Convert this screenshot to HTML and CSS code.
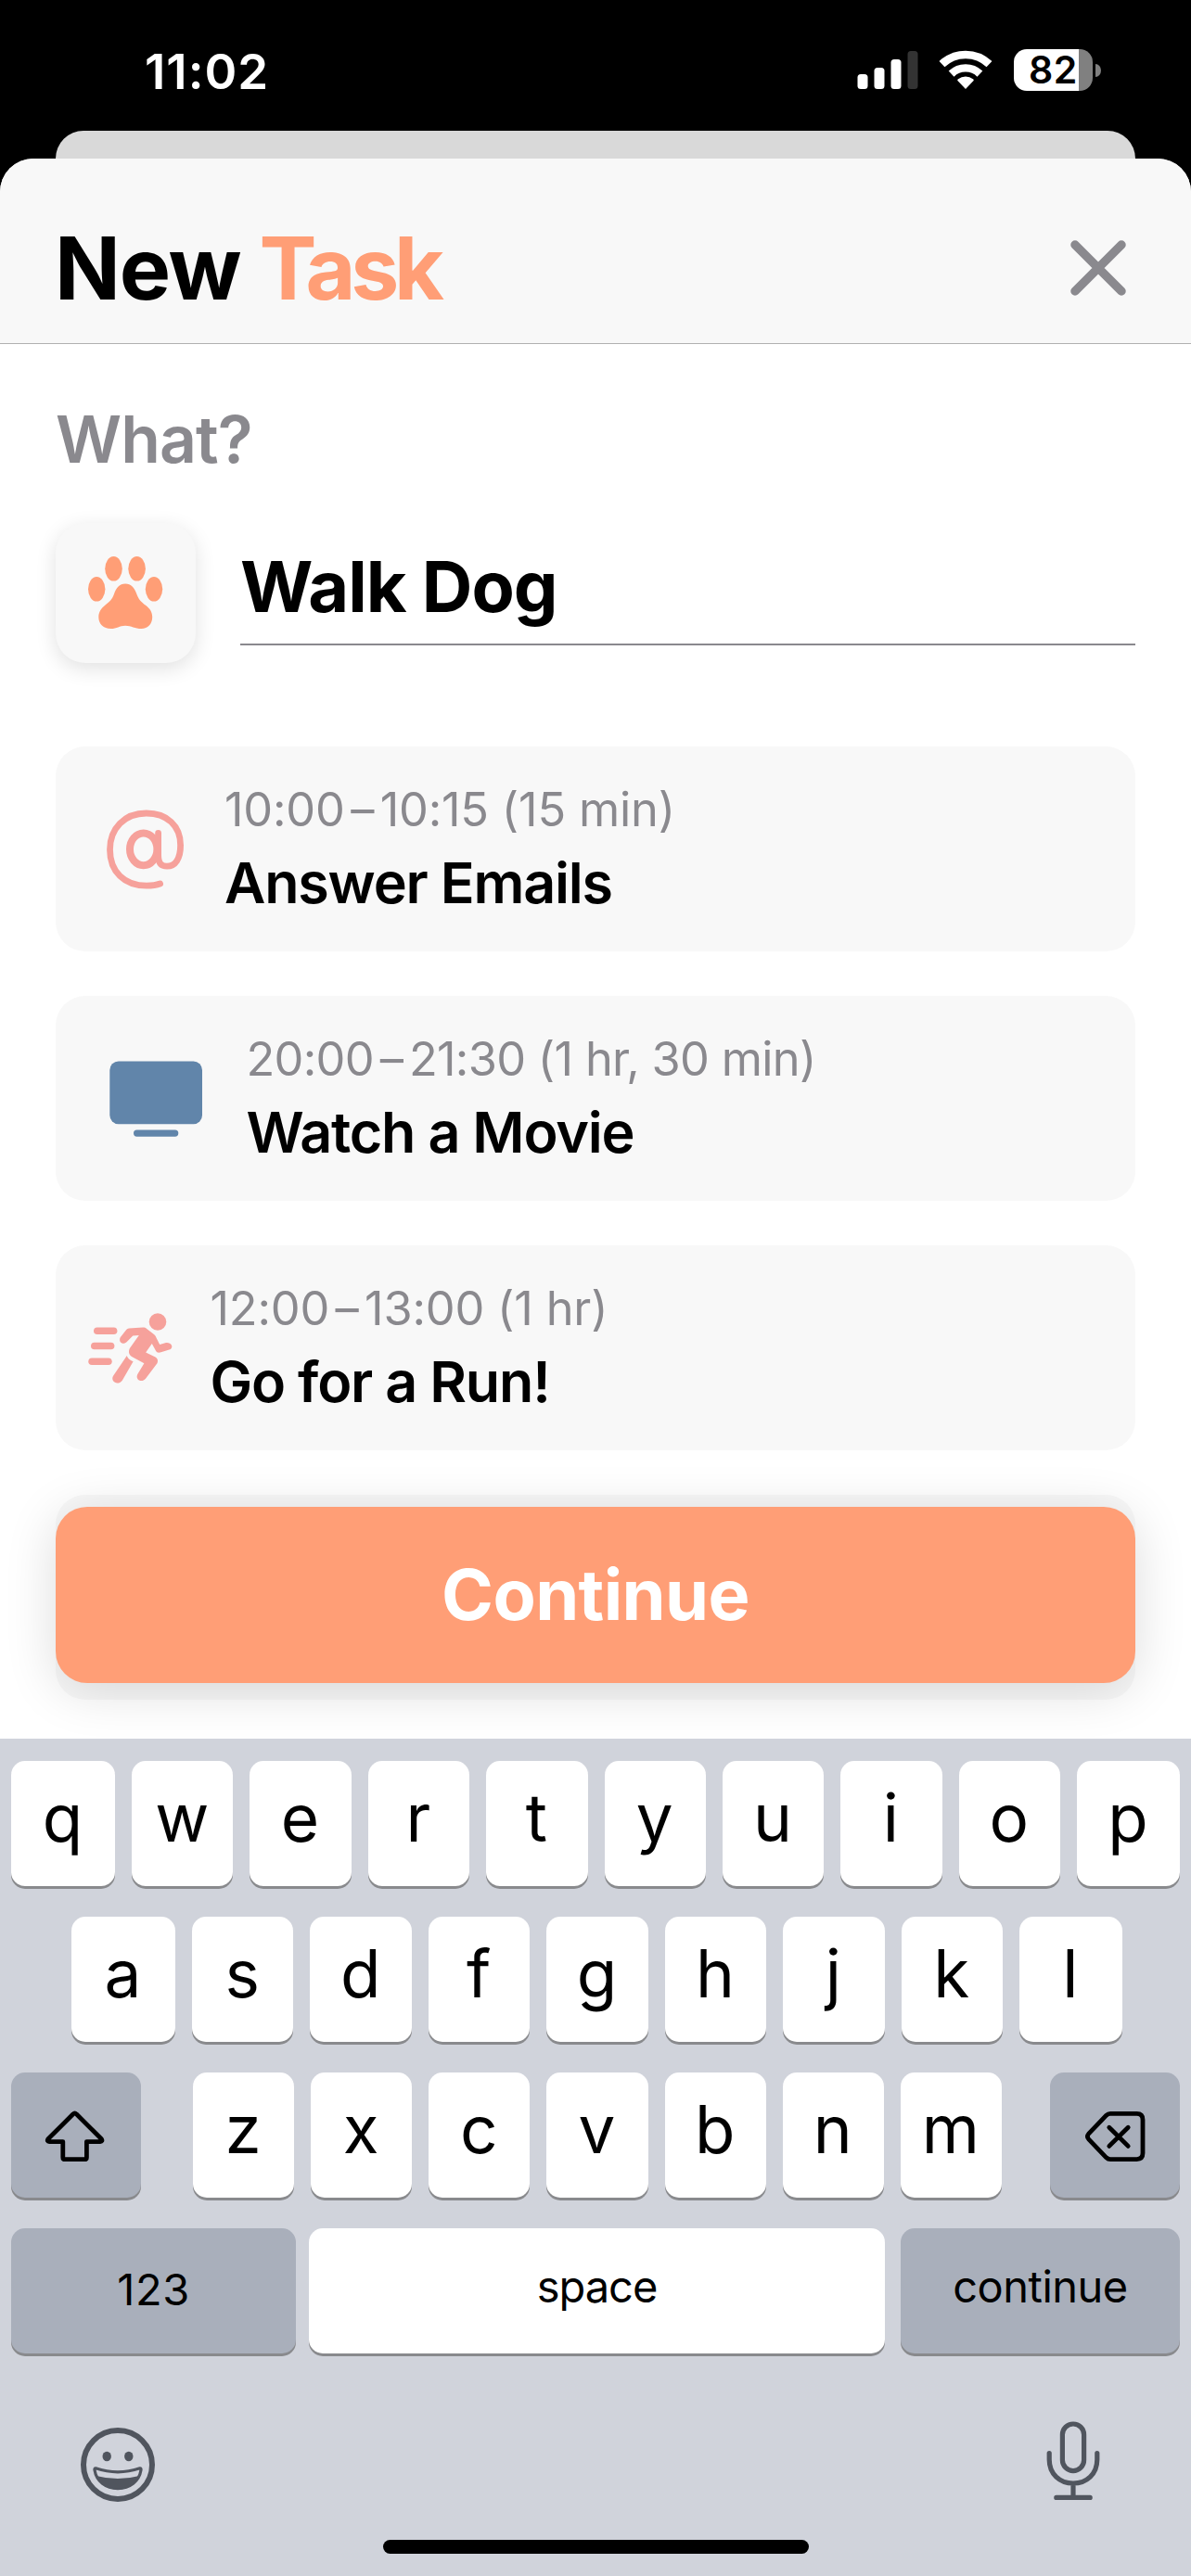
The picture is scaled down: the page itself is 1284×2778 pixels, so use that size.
FILE: index.html
```html
<!DOCTYPE html>
<html lang="en">
<head>
  <meta charset="UTF-8">
  <meta name="viewport" content="width=device-width, initial-scale=1.0">
  <title>New Task</title>
  <link rel="stylesheet" href="styles.css">
</head>
<body>

<div class="status-bar">
  <span class="time">11:02</span>
  <div class="status-icons">
    <svg class="signal" viewBox="0 0 66 45">
      <rect x="0.5" y="27" width="11" height="16" rx="3.5" fill="#fff"/>
      <rect x="18.5" y="20" width="11" height="23" rx="3.5" fill="#fff"/>
      <rect x="36.5" y="11" width="11" height="32" rx="3.5" fill="#fff"/>
      <rect x="54.5" y="2" width="11" height="41" rx="3.5" fill="#333"/>
    </svg>
    <svg class="wifi" viewBox="0 0 60 45">
      <g fill="none" stroke="#fff">
        <path d="M4.5 16.2A36.8 36.8 0 0 1 55.5 16.2" stroke-width="8.6"/>
        <path d="M14.6 26.6A22.2 22.2 0 0 1 45.4 26.6" stroke-width="8.4"/>
      </g>
      <path d="M30 43L21.9 34.6C21 33.6 21 32.9 22 32.2A12.8 12.8 0 0 1 38 32.2C39 32.9 39 33.6 38.1 34.6Z" fill="#fff"/>
    </svg>
    <div class="battery">82</div>
    <span class="battery-tip"></span>
  </div>
</div>

<div class="back-card"></div>

<div class="sheet">
  <div class="sheet-header">
    <h1><span class="title-new">New</span> <span class="title-task">Task</span></h1>
    <svg class="close" viewBox="0 0 62 62">
      <path d="M6 6L56 56M56 6L6 56" stroke="#8a898e" stroke-width="9.5" stroke-linecap="round"/>
    </svg>
  </div>

  <div class="sheet-body">
    <h2>What?</h2>

    <div class="name-row">
      <div class="icon-tile">
        <svg class="paw" viewBox="95 600 81 79" fill="#ff9e76">
          <ellipse cx="122.5" cy="613.3" rx="9.3" ry="13.3"/>
          <ellipse cx="147.6" cy="613.3" rx="9.3" ry="13.3"/>
          <ellipse cx="104.2" cy="635.3" rx="9.2" ry="13.3"/>
          <ellipse cx="166" cy="635.3" rx="9.2" ry="13.3"/>
          <path d="M135.1 629.5C141.5 629.5 144.8 633.8 147.1 640C149.5 646.5 152 649 157 652.8C161.5 656.3 164.2 660 164.2 665.5C164.2 672.8 159.3 678 152.5 678C145.5 678 141.5 674.7 135.1 674.7C128.7 674.7 126 678 119.5 678C111.5 678 106.3 672.8 106.3 665.5C106.3 660 109 656.3 113.5 652.5C118.5 648.5 120.9 646.5 123.2 640C125.5 633.8 128.7 629.5 135.1 629.5Z"/>
        </svg>
      </div>
      <input class="task-name" type="text" value="Walk Dog">
    </div>

    <div class="task-list">
      <div class="task">
        <svg class="icon-at" viewBox="95 865 123 100" fill="none" stroke="#f6a19b">
          <ellipse cx="154.7" cy="914.8" rx="14.7" ry="17.4" stroke-width="8"/>
          <path d="M170.6 897.5V921C170.6 929.5 173.5 933.2 180 933.2C189 933.2 194.6 925 194.6 910.5C194.6 889.5 180 876 157.8 876C134 876 118.5 892.5 118.5 915.2C118.5 939 134 954.2 158 954.2C164 954.2 169 953.4 172.6 952" stroke-width="6.8" stroke-linecap="round"/>
        </svg>
        <div class="info">
          <div class="when">10:00<span class="dash">–</span>10:15 (15 min)</div>
          <div class="name">Answer Emails</div>
        </div>
      </div>

      <div class="task">
        <svg class="icon-tv" viewBox="95 1134.5 146.5 100" fill="#6185aa">
          <rect x="118.3" y="1144" width="99.7" height="67.7" rx="9.5"/>
          <rect x="144" y="1218" width="48.3" height="7.2" rx="3.6"/>
        </svg>
        <div class="info">
          <div class="when when-long">20:00<span class="dash">–</span>21:30 (1 hr, 30 min)</div>
          <div class="name">Watch a Movie</div>
        </div>
      </div>

      <div class="task">
        <svg class="icon-run" viewBox="95 1403.5 107.5 100" fill="#f6a19b">
          <circle cx="170" cy="1425" r="9.3"/>
          <rect x="101" y="1431" width="25.4" height="7.6" rx="3.8"/>
          <rect x="98" y="1447.2" width="25.4" height="7.6" rx="3.8"/>
          <rect x="95.3" y="1464" width="25.4" height="7.6" rx="3.8"/>
          <path d="M139 1432L154 1431C156 1431 157 1431.4 158.2 1432.5L166 1438.5C167.2 1439.4 167.8 1440.2 168.3 1441.8L172.2 1449.4L179 1447.6C184 1446.8 187.4 1451.7 184 1454.4L173.6 1457.8C170.5 1458.6 168.9 1458 168 1456.2L163.8 1448.4L157.2 1458L167.5 1463C170 1464.6 170.6 1466.6 169.6 1469.5L157 1486.2C152.6 1491.5 145.4 1487.2 148.3 1481.5L155.4 1469.7L142 1462.5C138.8 1460.3 138.2 1457 139.9 1453.5L149.8 1439.6L143.2 1440L136.8 1446.6C133 1450.6 127.2 1447.2 129.7 1441.8L136.2 1433.6C137 1432.5 137.8 1432.1 139 1432Z"/>
          <path d="M136.8 1461.6C137.3 1464 139.8 1466.3 143.6 1467.8L131.8 1488.2C127 1494.2 118.9 1489.6 121.9 1483.6Z"/>
        </svg>
        <div class="info">
          <div class="when">12:00<span class="dash">–</span>13:00 (1 hr)</div>
          <div class="name">Go for a Run!</div>
        </div>
      </div>

      <div class="task"></div>
    </div>

    <button class="continue-btn">Continue</button>
  </div>
</div>

<div class="keyboard">
  <div class="row">
    <button class="key first">q</button>
    <button class="key">w</button>
    <button class="key">e</button>
    <button class="key">r</button>
    <button class="key">t</button>
    <button class="key">y</button>
    <button class="key">u</button>
    <button class="key">i</button>
    <button class="key">o</button>
    <button class="key last">p</button>
  </div>
  <div class="row row-2">
    <button class="key first">a</button>
    <button class="key">s</button>
    <button class="key">d</button>
    <button class="key">f</button>
    <button class="key">g</button>
    <button class="key">h</button>
    <button class="key">j</button>
    <button class="key">k</button>
    <button class="key last">l</button>
  </div>
  <div class="row row-3">
    <button class="key dark shift">
      <svg viewBox="0 0 66 56" fill="none" stroke="#000" stroke-width="4.8" stroke-linejoin="round">
        <path d="M30.9 3.8Q32.6 2 34.3 3.8L61.4 30.8Q63 33.4 60 33.6H45.4V50.4Q45.4 52.7 43.1 52.7H22.1Q19.8 52.7 19.8 50.4V33.6H5.2Q2.2 33.4 3.8 30.8Z"/>
      </svg>
    </button>
    <button class="key">z</button>
    <button class="key">x</button>
    <button class="key">c</button>
    <button class="key">v</button>
    <button class="key">b</button>
    <button class="key">n</button>
    <button class="key">m</button>
    <button class="key dark delete">
      <svg viewBox="0 0 66 56" fill="none" stroke="#000" stroke-width="4.8" stroke-linejoin="round" stroke-linecap="round">
        <path d="M28 3.4H56.5Q63 3.4 63 9.9V46.1Q63 52.6 56.5 52.6H28Q25.5 52.6 23.7 50.8L4.6 30.8Q2.2 28 4.6 25.2L23.7 5.2Q25.5 3.4 28 3.4Z"/>
        <path d="M26.8 18.2L47.2 38.4M47.2 18.2L26.8 38.4"/>
      </svg>
    </button>
  </div>
  <div class="row row-4">
    <button class="key dark num">123</button>
    <button class="key space">space</button>
    <button class="key dark return">continue</button>
  </div>

  <div class="toolbar">
    <svg class="emoji" viewBox="0 0 82 82" fill="#50555e">
      <circle cx="41" cy="41" r="37" fill="none" stroke="#50555e" stroke-width="6"/>
      <ellipse cx="29.2" cy="32" rx="4.7" ry="5.3"/>
      <ellipse cx="52.8" cy="32" rx="4.7" ry="5.3"/>
      <path d="M17.2 44.8Q41 52.8 64.8 44.8Q66.4 44.6 66 46.8C64 59 54 66.6 41 66.6C28 66.6 18 59 16 46.8Q15.6 44.6 17.2 44.8Z" fill="none" stroke="#50555e" stroke-width="3.2"/>
      <path d="M19 53.2Q41 59 63 53.2C60.5 62 51 67.6 41 67.6C31 67.6 21.5 62 19 53.2Z"/>
    </svg>
    <svg class="mic" viewBox="0 0 58 86" fill="none" stroke="#50555e" stroke-width="5.2" stroke-linecap="round">
      <rect x="17.4" y="3" width="23.2" height="50.6" rx="11.6"/>
      <path d="M3.2 34.6V41.5C3.2 57 14.5 67 29 67C43.5 67 54.8 57 54.8 41.5V34.6M29 67.5V81M10.8 82.4H47.2"/>
    </svg>
  </div>

  <div class="home-indicator"></div>
</div>

</body>
</html>
```
FILE: styles.css
```css
* {
  box-sizing: border-box;
}

body {
  margin: 0;
  width: 1284px;
  height: 2778px;
  background: #000;
  font-family: Inter, "Liberation Sans", sans-serif;
  color: #000;
  overflow: hidden;
}

h1, h2 {
  margin: 0;
}

svg {
  display: block;
  flex: none;
}

button {
  border: none;
  padding: 0;
  font-family: inherit;
  color: #000;
  cursor: pointer;
}

/* status bar */
.status-bar {
  height: 141px;
  padding: 47px 97px 0 156px;
  display: flex;
  justify-content: space-between;
  align-items: flex-start;
  color: #fff;
}

.time {
  font-size: 52.8px;
  font-weight: 600;
  line-height: 60px;
  letter-spacing: 1px;
}

.status-icons {
  display: flex;
  align-items: center;
  margin-top: 6px;
}

.signal { width: 66px; height: 45px; }
.wifi { width: 60px; height: 45px; margin-left: 21.5px; }

.battery {
  width: 85px;
  height: 45px;
  margin-left: 22px;
  padding-left: 16px;
  border-radius: 14px;
  background: linear-gradient(to right, #fff 70px, #808080 70px);
  color: #000;
  font-size: 41px;
  font-weight: 600;
  line-height: 45px;
  letter-spacing: 0.5px;
}

.battery-tip {
  width: 6px;
  height: 14px;
  margin-left: 3px;
  border-radius: 0 6px 6px 0 / 0 7px 7px 0;
  background: #808080;
}

/* sheet */
.back-card {
  height: 60px;
  margin: 0 60px -30px;
  border-radius: 30px 30px 0 0;
  background: #d9d9d9;
}

.sheet {
  position: relative;
  height: 1704px;
  border-radius: 36px 36px 0 0;
  background: #fff;
  overflow: hidden;
}

.sheet-header {
  height: 200px;
  padding: 36px 69px 0 59px;
  display: flex;
  justify-content: space-between;
  align-items: center;
  background: #f8f8f8;
  border-bottom: 1px solid #b0b0b0;
}

h1 {
  font-size: 93px;
  font-weight: 660;
  line-height: 112px;
}

.title-new {
  letter-spacing: -1.2px;
}

.title-task {
  margin-left: -2px;
  color: #ff9e76;
  letter-spacing: -5.3px;
}

.close { width: 62px; height: 62px; }

.sheet-body {
  padding: 61px 60px 0;
}

h2 {
  color: #8a898e;
  font-size: 69.7px;
  font-weight: 600;
  line-height: 84px;
  letter-spacing: -0.9px;
}

.name-row {
  display: flex;
  align-items: flex-end;
  gap: 48px;
  margin-top: 48px;
}

.icon-tile {
  width: 151px;
  height: 151px;
  display: flex;
  align-items: center;
  justify-content: center;
  border-radius: 32px;
  background: #f8f8f8;
  box-shadow: 0 6px 22px rgba(0, 0, 0, 0.12);
}

.paw { width: 81px; height: 79px; }

.task-name {
  flex: 1;
  min-width: 0;
  height: 110px;
  margin-bottom: 19px;
  padding: 0 0 15px;
  border: none;
  border-bottom: 2px solid #8a898e;
  background: none;
  font-family: inherit;
  font-size: 75.6px;
  font-weight: 700;
  letter-spacing: -0.9px;
  color: #000;
  outline: none;
}

.task-list {
  display: flex;
  flex-direction: column;
  gap: 48px;
  margin-top: 90px;
}

.task {
  height: 221px;
  padding-left: 35px;
  display: flex;
  align-items: center;
  gap: 24px;
  border-radius: 32px;
  background: #f8f8f8;
}

.icon-at { width: 123px; height: 100px; }
.icon-tv { width: 146.5px; height: 100px; }
.icon-run { width: 107.5px; height: 100px; }

.info { padding-bottom: 1px; }

.when {
  color: #8a898e;
  font-size: 50.5px;
  line-height: 60px;
  letter-spacing: -0.2px;
}

.when-long { letter-spacing: -0.7px; }

.dash {
  display: inline-block;
  width: 38px;
  text-align: center;
}

.name {
  margin-top: 13px;
  font-size: 61px;
  font-weight: 600;
  line-height: 72px;
  letter-spacing: -1.2px;
}

/* floats over the end of the list */
.continue-btn {
  position: absolute;
  left: 60px;
  right: 60px;
  bottom: 60px;
  height: 190px;
  border-radius: 34px;
  background: #ff9e76;
  box-shadow: 0 8px 56px rgba(0, 0, 0, 0.14);
  color: #fff;
  font-size: 75.6px;
  font-weight: 700;
  line-height: 190px;
  letter-spacing: -0.6px;
}

/* keyboard */
.keyboard {
  height: 903px;
  padding: 24px 12px 0;
  background: #d0d3db;
}

.row {
  display: flex;
  gap: 18px;
  margin-bottom: 33px;
}

.row-2 { padding: 0 62px 0 65px; }

.key {
  flex: 1 1 0;
  min-width: 0;
  height: 135px;
  padding: 0 1px 13px 0;
  border-radius: 15px;
  background: #fff;
  box-shadow: 0 3px 0 #898a8d;
  font-size: 71px;
  font-weight: 400;
  line-height: 122px;
}

.first { flex: 0 0 112px; }
.last { flex: 0 0 111px; }

.dark {
  padding-bottom: 0;
  background: #a9afbb;
}

.shift, .delete {
  flex: 0 0 140px;
  display: flex;
  align-items: center;
}

.shift svg, .delete svg { width: 66px; height: 56px; }

.shift { margin-right: 38px; padding-left: 36px; padding-top: 2px; }
.delete { margin-left: 34px; padding-left: 37px; padding-top: 2px; }

.row-4 { gap: 0; margin-bottom: 0; }

.num, .space, .return {
  padding-right: 0;
  font-size: 47px;
}

.num { flex: 0 0 307px; line-height: 132px; padding-bottom: 3px; letter-spacing: 0.6px; }
.space { margin: 0 17px 0 14px; padding-bottom: 10px; letter-spacing: -1px; }
.return { flex: 0 0 301px; padding-bottom: 10px; letter-spacing: -0.5px; }

.toolbar {
  height: 201px;
  padding: 73px 86px 0 74px;
  display: flex;
  justify-content: space-between;
  align-items: flex-start;
}

.emoji { width: 82px; height: 82px; margin-top: 6px; }
.mic { width: 58px; height: 86px; }

.home-indicator {
  width: 459px;
  height: 15px;
  margin: 0 auto;
  border-radius: 8px;
  background: #000;
}
```
